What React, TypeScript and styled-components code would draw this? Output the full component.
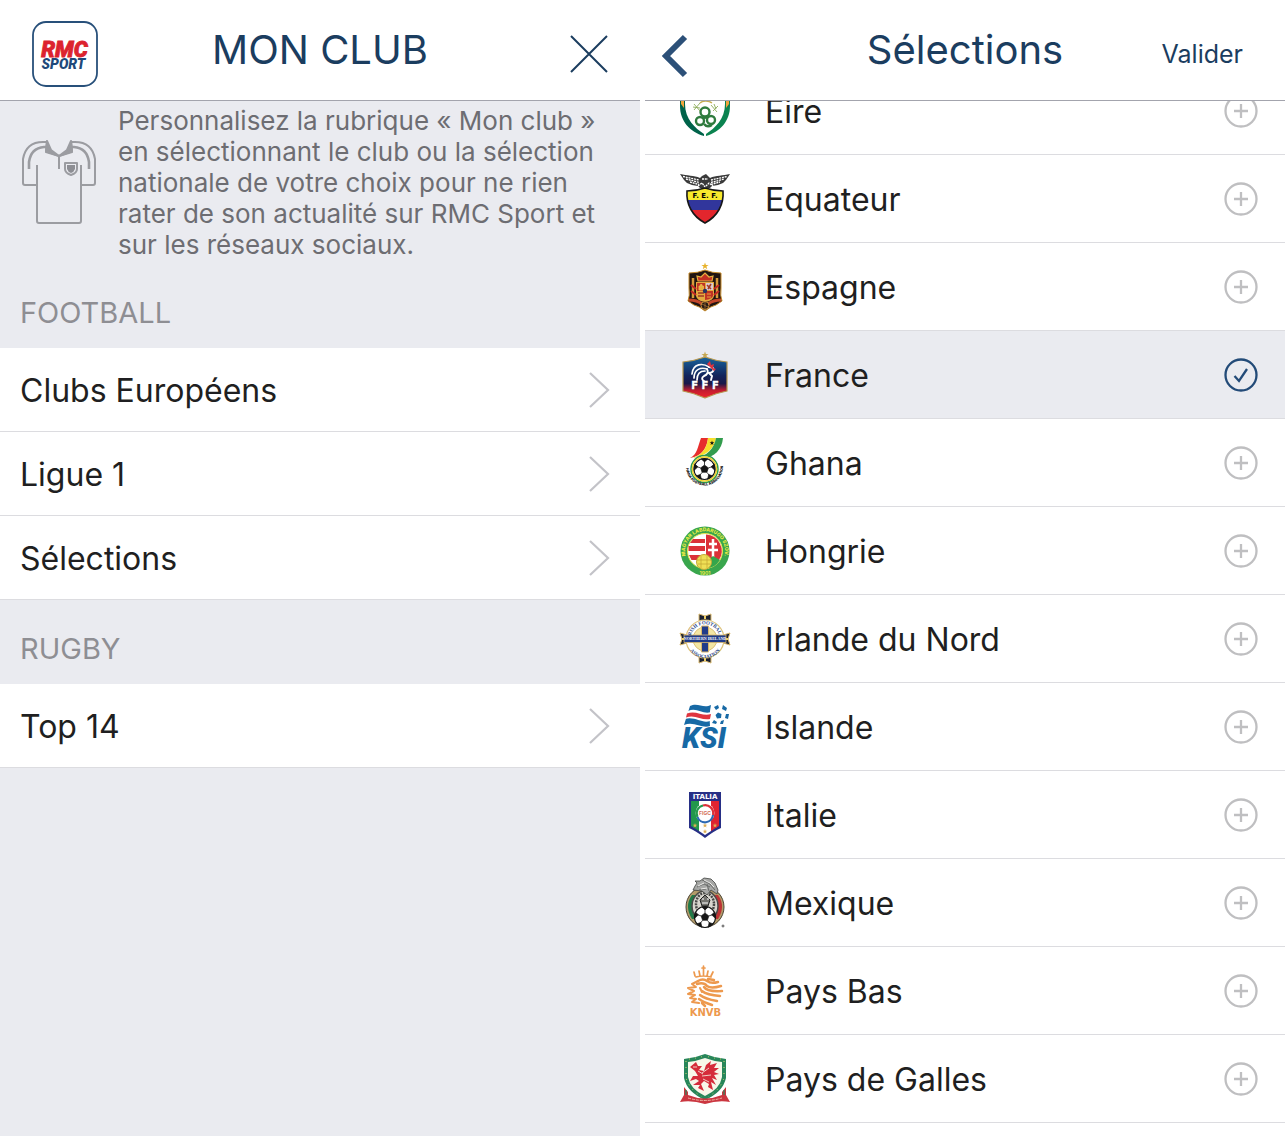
import React, { useState } from "react";
import styled, { createGlobalStyle } from "styled-components";

const navy = "#1b3d5f";
const paper = "#eaebf0";
const rule = "#dcdce0";

const GlobalStyle = createGlobalStyle`
  *, *::before, *::after { box-sizing: border-box; }
  body {
    margin: 0;
    background: #fff;
    color: #1f1f21;
    font-family: Inter, Roboto, "Liberation Sans", sans-serif;
  }
`;

const Screens = styled.main`
  display: grid;
  grid-template-columns: 1fr 1fr;
  gap: 5px;
  height: 100vh;
  overflow: hidden;
`;

const Screen = styled.section<{ $tone?: string }>`
  display: flex;
  flex-direction: column;
  min-width: 0;
  min-height: 0;
  background: ${(p) => p.$tone ?? "#fff"};
`;

const Header = styled.header`
  display: grid;
  grid-template-columns: 1fr auto 1fr;
  align-items: center;
  flex: none;
  height: 101px;
  padding-top: 8px;
  background: #fff;
  border-bottom: 1px solid #a3a4ad;
`;

const Title = styled.h1`
  margin: 0;
  padding-bottom: 8px;
  color: ${navy};
  font-size: 40px;
  font-weight: 400;
  line-height: 48px;
`;

const Logo = styled.a`
  display: block;
  justify-self: start;
  height: 66px;
  margin-left: 32px;
`;

const HeaderButton = styled.button<{ $side: "start" | "end"; $inset: number }>`
  display: flex;
  justify-self: ${(p) => p.$side};
  margin: 0 ${(p) => p.$inset}px;
  padding: 0;
  border: 0;
  background: none;
  color: ${navy};
  font: inherit;
  font-size: 25px;
  line-height: 32px;
  cursor: pointer;
`;

const Intro = styled.div`
  display: flex;
  align-items: center;
  gap: 22px;
  padding: 4px 36px 4px 22px;

  svg { flex: none; }
`;

const IntroText = styled.p`
  margin: 0;
  color: #6d6d72;
  font-size: 26px;
  line-height: 31px;
`;

const GroupTitle = styled.h2`
  display: flex;
  align-items: center;
  height: 84px;
  margin: 0;
  padding: 12px 20px 0;
  color: #8e8e93;
  font-size: 29px;
  font-weight: 400;
`;

const PlainList = styled.ul`
  margin: 0;
  padding: 0;
  list-style: none;
`;

const MenuLink = styled.a`
  display: flex;
  align-items: center;
  justify-content: space-between;
  height: 84px;
  padding: 0 30px 0 20px;
  border-bottom: 1px solid ${rule};
  background: #fff;
  color: inherit;
  font-size: 32px;
  text-decoration: none;
`;

const RowText = styled.span`
  flex: 1;
  padding-top: 2px;
`;

const Viewport = styled.div`
  flex: 1;
  min-height: 0;
  overflow: hidden;
`;

const ScrolledList = styled(PlainList)`
  margin-top: -34px;
`;

const TeamRow = styled.label<{ $selected: boolean }>`
  display: flex;
  align-items: center;
  gap: 35px;
  height: 88px;
  padding: 0 27px 0 35px;
  border-bottom: 1px solid ${rule};
  background: ${(p) => (p.$selected ? paper : "#fff")};
  font-size: 32px;
  cursor: pointer;
`;

const Tick = styled.span`
  display: grid;
  width: 34px;
  height: 34px;

  > * { grid-area: 1 / 1; }
`;

const TickInput = styled.input`
  width: 34px;
  height: 34px;
  margin: 0;
  border-radius: 50%;
  appearance: none;
  cursor: pointer;
`;

const TickMark = styled.svg`
  pointer-events: none;
`;

const CrestArt = styled.svg`
  flex: none;
  width: 50px;
  height: 50px;
  overflow: visible;
`;

const star = "M0-4 1-1.2 4-1.2 1.6.6 2.5 3.5 0 1.7-2.5 3.5-1.6.6-4-1.2-1-1.2Z";

const Ball = ({ x, y, r }: { x: number; y: number; r: number }) => (
  <g transform={`translate(${x} ${y}) scale(${r / 10})`}>
    <circle r="9.6" fill="#fff" stroke="#151515" strokeWidth="1" />
    <path d="M0-3.6 3.5-1 2.2 3-2.2 3-3.5-1ZM-3-9.2 3-9.2 0-6.4ZM8.8-4.6 9.6 1.4 6-2ZM7.4 6.2 2.8 9.3 3.8 5ZM-7.4 6.2-2.8 9.3-3.8 5ZM-8.8-4.6-9.6 1.4-6-2Z" fill="#151515" stroke="#151515" strokeWidth=".6" />
    <path d="M0-3.6V-7M3.5-1 6.7-2M2.2 3 4.2 5.7M-2.2 3-4.2 5.7M-3.5-1-6.7-2" fill="none" stroke="#151515" strokeWidth=".7" />
  </g>
);

const Eire = () => (
  <>
    <path d="M0 0H5V18C5 33 15 42 24 48V50C10 46 0 35 0 20Z" fill="#00634a" />
    <path d="M50 0H45V18C45 33 35 42 26 48V50C40 46 50 35 50 20Z" fill="#0b8350" />
    <path d="M1 6H4V22L1 18ZM46 6H49V18L46 22Z" fill="#f0a33c" />
    <g fill="none" stroke="#2f7b3e" strokeWidth="2.4">
      <circle cx="20" cy="35" r="4" />
      <circle cx="31" cy="34" r="4" />
      <circle cx="25" cy="26" r="4.5" />
      <path d="M22 31Q26 33 28 30M24 38Q27 42 32 39" />
    </g>
    <path d="M14 18 20 25M20 17 14 24M13 21 20 22M34 18 36 23M31 19 37 26M38 20 33 25" stroke="#8cab5a" strokeWidth=".9" />
    <path d="M20 17C23 14 29 15 32 17" fill="none" stroke="#c7ad52" strokeWidth="1.4" />
  </>
);

const ecuadorShield = "M7 17Q16 17 25 14 34 17 43 17C44 30 38 42 25 49 12 42 6 30 7 17Z";

const Equateur = () => (
  <>
    <path d="M0 0C7 2 14 1 20 4L22 2 26 0 29 3 30 4C36 1 43 2 50 0L46 6 43 9 38 11 32 12 30 14H20L18 12 12 11 7 9 4 6Z" fill="#3a3a3a" />
    <path d="M3 2.5 19 6M6 5 19 8.5M10 8 19 10.5M31 6 47 2.5M31 8.5 44 5M31 10.5 40 8M22 5H28M18 12 22 9 25 13 29 9 33 12" fill="none" stroke="#fff" strokeWidth="1.3" strokeDasharray="2 .8" />
    <clipPath id="ecuador-shield"><path d={ecuadorShield} /></clipPath>
    <g clipPath="url(#ecuador-shield)">
      <path d="M0 12H50V26H0Z" fill="#f8ea2d" />
      <path d="M0 26H50V36H0Z" fill="#31369c" />
      <path d="M0 36H50V50H0Z" fill="#e3262d" />
    </g>
    <path d={ecuadorShield} fill="none" stroke="#171717" strokeWidth="1.6" />
    <text x="25" y="24" textAnchor="middle" fontSize="7" fontWeight="700" fontFamily="DejaVu Sans, sans-serif">F. E. F.</text>
  </>
);

const Espagne = () => (
  <>
    <path d={star} transform="translate(25 4) scale(.9)" fill="#e8b32c" />
    <path d="M9 11Q18 11 25 8 32 11 41 11V26Q40 34 42 39L36 43Q31 44 25 49 19 44 14 43L8 39Q10 34 9 26Z" fill="#211511" stroke="#c58a2a" strokeWidth="1" />
    <path d="M16 20H34V34Q33 39 25 40 17 39 16 34Z" fill="#e3a93f" />
    <path d="M17 21H25V29H17ZM25 29H33V34Q32 37 25 38Z" fill="#c03424" />
    <path d="M26 21H33V28H26Z" fill="#dccbd2" />
    <path d="M18 31H24M18 34H24M27 23 31 27M28 27 31 22" stroke="#a13a26" strokeWidth="1.6" />
    <path d="M19 24H20.5V22.5H22V24H23.5V28H19ZM27 32H31M27 35H31" stroke="#efbd4b" strokeWidth=".8" fill="#e5b040" />
    <circle cx="25" cy="29" r="2.2" fill="#29345f" />
    <path d="M18 19 17 14 21 15 25 11 29 15 33 14 32 19Z" fill="#c13123" stroke="#e4ae40" strokeWidth="1.2" />
    <path d="M13 16V36M37 16V36" stroke="#d69b3b" strokeWidth="2.5" />
    <path d="M11 23 16 27M11 29 16 33M39 23 34 27M39 29 34 33" stroke="#c42824" strokeWidth="2" />
    <path d="M9 38Q17 38 22 42M41 38Q33 38 28 42" stroke="#c4472a" strokeWidth="3" fill="none" />
    <circle cx="25" cy="43.5" r="4" fill="#261a15" stroke="#cf923d" />
    <path d="M22 42 28 45M25 40V47" stroke="#b27933" strokeWidth=".7" />
  </>
);

const France = () => (
  <>
    <defs>
      <linearGradient id="france-field" x1="0" y1="0" x2="0" y2="1">
        <stop offset="0" stopColor="#18649c" />
        <stop offset=".45" stopColor="#13255c" />
        <stop offset=".65" stopColor="#1a1748" />
        <stop offset=".82" stopColor="#c51c2f" />
        <stop offset="1" stopColor="#ee252b" />
      </linearGradient>
    </defs>
    <path d="M25 7Q36 11 47 12V41Q36 43 25 48 14 43 3 41V12Q14 11 25 7Z" fill="url(#france-field)" stroke="#b6974f" strokeWidth="1.2" />
    <path d={star} transform="translate(25 5) scale(.9)" fill="#c5a752" />
    <g fill="none" stroke="#fff" strokeLinecap="round">
      <path d="M12 24C13 13 23 13 29 17M14 28C14 19 21 17 27 19M17 30C17 23 20 21 25 21" strokeWidth="1.7" />
      <path d="M29 17C35 17 35 22 29 23M27 19C29 22 27 25 24 26 21 28 22 30 24 31M29 23 32 26 31 30" strokeWidth="1.9" />
    </g>
    <path d="M27 14 30 11 31 15 34 14 33 18 36 19 34 21Z" fill="#dd3340" />
    <text x="25" y="39" textAnchor="middle" fontSize="10" fontWeight="700" fontFamily="DejaVu Sans, sans-serif" fill="#fff" stroke="#fff" strokeWidth=".3">F F F</text>
  </>
);

const Ghana = () => (
  <>
    <path d="M10 20C17 17 18 8 21 0H28C27 10 22 18 10 20Z" fill="#e72e2d" />
    <path d="M12 20C23 17 27 9 28 0H36C34 11 26 18 12 20Z" fill="#f6df2d" />
    <path d="M14 21C27 18 34 11 36 0H43C42 12 34 19 24 20Z" fill="#329c4d" />
    <path d={star} transform="translate(32 5) scale(.6)" fill="#111" />
    <circle cx="24.5" cy="31" r="13.5" fill="#fff" stroke="#2f9b4d" strokeWidth="1.5" />
    <circle cx="24.5" cy="31" r="12" fill="none" stroke="#efd32d" strokeWidth="1.5" />
    <Ball x={24.5} y={31} r={11} />
    <path id="ghana-ring" d="M6 29A18.5 18.5 0 0 0 43 29" fill="none" />
    <text fontSize="3.6" fontWeight="900" fill="#222"><textPath href="#ghana-ring" startOffset="50%" textAnchor="middle">GHANA FOOTBALL ASSOCIATION</textPath></text>
  </>
);

const Hongrie = () => (
  <>
    <circle cx="25" cy="25" r="24.5" fill="#39a64d" />
    <circle cx="25" cy="25" r="17.5" fill="#fff" stroke="#e4e54c" strokeWidth="1" />
    <path d="M13 13H25V17H10ZM8.500 20H25V25H8.500ZM9 29H25V34H11.500Z" fill="#db3138" />
    <path d="M26 8.500A16.500 16.500 0 0 1 39 34H26Z" fill="#db3138" />
    <path d="M33 13V31M29 18H37M28 24H38" stroke="#fff" strokeWidth="2.5" />
    <path d="M26 36 33 30 40 34Q34 43 26 42Z" fill="#34a54b" />
    <circle cx="24" cy="36" r="7.5" fill="#eedf55" stroke="#c2a938" />
    <path d="M17 34H31M18 38H30M21 30V42M27 30V42" stroke="#c5aa36" strokeWidth=".8" />
    <path id="hungary-ring" d="M7 34A20 20 0 1 1 43 34" fill="none" />
    <text fontSize="5" fontWeight="800" fill="#e8e945"><textPath href="#hungary-ring" startOffset="50%" textAnchor="middle">MAGYAR LABDARUGO SZOV.</textPath></text>
    <text x="25" y="48.5" textAnchor="middle" fontSize="5" fontWeight="700" fill="#e8e945">1901</text>
  </>
);

const IrlandeDuNord = () => (
  <>
    <path d="M19 0 25 2 31 0V7H28V43H31V49L25 47 19 49V43H22V7H19Z" fill="#1b2131" stroke="#d8b86e" strokeWidth="1" />
    <path d="M0 19 7 21H43L50 19 48 25 50 31 43 29H7L0 31 2 25Z" fill="#1b2131" stroke="#d8b86e" strokeWidth="1" />
    <circle cx="25" cy="25" r="19" fill="#fff" stroke="#ddc178" strokeWidth="1.2" />
    <circle cx="25" cy="25" r="12" fill="#f3e6a4" stroke="#ddc178" strokeWidth="1" />
    <path d="M21.500 12H28.500V38H21.500Z" fill="#203c89" stroke="#d8b86e" />
    <path d="M4 21H46V28.500H4Z" fill="#203c89" stroke="#d8b86e" strokeWidth=".8" />
    <text x="25" y="26.2" textAnchor="middle" fontSize="4" fontWeight="700" fill="#fff" fontFamily="Liberation Serif, serif">NORTHERN IRELAND</text>
    <path id="ifa-top" d="M11 21A14.5 14.5 0 0 1 39 21" fill="none" />
    <path id="ifa-bottom" d="M7 30A18.5 18.5 0 0 0 43 30" fill="none" />
    <g fontFamily="Liberation Serif, serif" fontSize="5" fontWeight="700" fill="#28478d">
      <text><textPath href="#ifa-top" startOffset="50%" textAnchor="middle">IRISH FOOTBALL</textPath></text>
      <text><textPath href="#ifa-bottom" startOffset="50%" textAnchor="middle">ASSOCIATION</textPath></text>
    </g>
    <path d="M25 2V5M25 44V47M2 25H4M46 25H48" stroke="#efcf66" strokeWidth="2" />
  </>
);

const Islande = () => (
  <>
    <path d="M10 4C18 0 23 7 31 3Q29 12 30 24C22 27 14 19 4 23Z" fill="#1769a5" />
    <path d="M8 9C17 5 23 13 31 10L30 19C22 22 15 14 5 17Z" fill="#fff" />
    <path d="M7 11.5C16 8 23 15 31 12L30 17C22 19 15 12 6 15.5Z" fill="#df353f" />
    <g fill="#1769a5">
      <path d="M34 5 38 3 39 6 36 8ZM43 3 47 6 46 9 42 7Z" />
      <path d="M38 10.5 41.5 12 41 16 37 16.5 35.5 13ZM46 12 49 12 48 17 45 16Z" />
      <path d="M34 18 37 20 36 22 32 21ZM41 19 44 18 43 22 40 22Z" />
    </g>
    <text x="24" y="46" textAnchor="middle" fontFamily="Roboto, sans-serif" fontStyle="italic" fontSize="29" fontWeight="900" fill="#1769a5">KSI</text>
  </>
);

const Italie = () => (
  <>
    <path d="M9 2H41V38Q34 41 25 48 16 41 9 38Z" fill="#272f86" />
    <path d="M11 11H19V41L11 36Z" fill="#23974b" />
    <path d="M19 11H31V41L25 45 19 41Z" fill="#fff" />
    <path d="M31 11H39V36L31 41Z" fill="#df2431" />
    <text x="25" y="9" textAnchor="middle" fontSize="7" fontWeight="700" fontFamily="DejaVu Sans, sans-serif" fill="#fff">ITALIA</text>
    <circle cx="25" cy="23" r="9.5" fill="#fff" />
    <path d="M17.5 27A8 8 0 0 1 23 15.5" fill="none" stroke="#27994c" strokeWidth="2.2" />
    <path d="M23 15.5A8 8 0 0 1 33 25" fill="none" stroke="#dc3038" strokeWidth="2.2" />
    <path d="M33 25A8 8 0 0 1 17.5 27" fill="none" stroke="#2c69b4" strokeWidth="2.2" />
    <text x="25" y="25" textAnchor="middle" fontSize="5" fontWeight="700" fill="#d2705a">FIGC</text>
    <g fill="#ddaf55">
      <path d={star} transform="translate(15 35.5) scale(.6)" />
      <path d={star} transform="translate(35 35.5) scale(.6)" />
      <path d={star} transform="translate(25 35.5) scale(.6)" />
      <path d={star} transform="translate(25 41.5) scale(.6)" />
    </g>
  </>
);

const Mexique = () => (
  <>
    <ellipse cx="25" cy="29" rx="19" ry="20" fill="#b39b69" stroke="#4d4638" />
    <path d="M12 17Q4 28 12 41L19 41V17Z" fill="#227a48" />
    <path d="M38 17Q46 28 38 41L31 41V17Z" fill="#bd3435" />
    <ellipse cx="25" cy="28" rx="13" ry="15" fill="#d9d7cf" stroke="#4a4a48" strokeWidth="1.5" />
    <ellipse cx="25" cy="26" rx="9" ry="11" fill="none" stroke="#484846" strokeWidth="2.5" strokeDasharray="2 1" />
    <path d="M15 8 17 5 15 3 20 3 24 0 31 1 35 5 38 12 37 16 31 12 27 17 22 13 13 12Z" fill="#a7a8a6" stroke="#414441" strokeWidth=".8" />
    <path d="M17 9 24 6 30 9M22 2 28 4 35 12M19 12 26 11M27 6 29 13M24 3 32 7" fill="none" stroke="#6a6c6a" strokeWidth="1" />
    <path d="M18 8 24 5M24 2 30 5 34 9M21 11 27 10" fill="none" stroke="#ededeb" strokeWidth="1" />
    <path d="M20 22 25 17 30 22 28 28H22Z" fill="#757570" stroke="#222" />
    <path d="M22 21H24M27 21H29M22 25H28" stroke="#fff" strokeWidth="1.2" />
    <Ball x={25} y={39} r={11} />
    <circle cx="43" cy="48" r="1" fill="none" stroke="#333" strokeWidth=".8" />
  </>
);

const PaysBas = () => (
  <>
    <g fill="none" stroke="#ed994e" strokeLinecap="round" strokeLinejoin="round">
      <path d="M15 10 14 6M31 10 33 6M20 10 19 5M27 10 28 5M23.500 10V3M16 11Q23 9 31 11M22 2H25M23.500 0V3" strokeWidth="1.7" />
      <path d="M18 15Q23 12 27 15 31 18 38 16M17 18Q24 16 27 20 31 23 41 20M24 21Q27 26 42 25M22 25Q27 29 40 30M20 29Q25 33 37 35M19 33Q23 36 32 39M22 37 25 40M28 13 34 14" strokeWidth="2.5" />
      <path d="M18 15 12 18 16 21 8 22 14 25 8 28 15 29 10 32 16 33 12 36 19 37M20 22 22 26" strokeWidth="2" />
    </g>
    <text x="25.500" y="50" textAnchor="middle" fontFamily="DejaVu Sans, sans-serif" fontSize="10" fontWeight="700" fill="#ed994e">KNVB</text>
  </>
);

const PaysDeGalles = () => (
  <>
    <path d="M4 5Q15 4 25 0 35 4 46 5V24Q43 38 25 46 7 38 4 24Z" fill="#28865a" />
    <path d="M8 8Q17 7 25 4 33 7 42 8V23Q40 35 25 42 10 35 8 23Z" fill="#f8f7e9" />
    <path d="M6 7V24Q10 36 22 43M44 7V24Q40 36 28 43M9 5Q18 4 24 2M41 5Q32 4 26 2" fill="none" stroke="#d8d66f" strokeWidth="1" strokeDasharray="1 5" />
    <path d="M10 13 16 8 18 12 22 12 19 16 24 17 26 11 31 7 30 11 37 9 34 14 39 14 34 18 39 20 34 21 37 26 32 24 36 31 31 28 33 36 28 33 29 30 24 27 21 30 24 37 18 34 20 31 13 31 19 27 16 25 10 27 13 22 18 22 15 17Z" fill="#d52c3a" />
    <path d="M22 19 29 14M22 22 31 21M18 17 23 20M23 25 29 28M13 13H17" stroke="#f8f7e9" strokeWidth=".8" />
    <path d="M4 33 8 38 8 41Q25 48 42 41L42 38 46 33 46 41 50 48Q38 46 25 50 12 46 0 48L4 41Z" fill="#cb3640" />
    <path d="M8 44Q25 49 42 44" fill="none" stroke="#efb5a5" strokeWidth="1" strokeDasharray="3 1" />
    <path d="M6 36V41M44 36V41" stroke="#28865a" strokeWidth="1.2" />
  </>
);

const teams = [
  { name: "Eire", Crest: Eire },
  { name: "Equateur", Crest: Equateur },
  { name: "Espagne", Crest: Espagne },
  { name: "France", Crest: France },
  { name: "Ghana", Crest: Ghana },
  { name: "Hongrie", Crest: Hongrie },
  { name: "Irlande du Nord", Crest: IrlandeDuNord },
  { name: "Islande", Crest: Islande },
  { name: "Italie", Crest: Italie },
  { name: "Mexique", Crest: Mexique },
  { name: "Pays Bas", Crest: PaysBas },
  { name: "Pays de Galles", Crest: PaysDeGalles },
];

const groups = [
  { title: "FOOTBALL", items: ["Clubs Européens", "Ligue 1", "Sélections"] },
  { title: "RUGBY", items: ["Top 14"] },
];

const RmcLogo = () => (
  <svg width="66" height="66" viewBox="0 0 66 66" role="img" aria-label="RMC Sport">
    <rect x="1" y="1" width="64" height="64" rx="13" fill="#fff" stroke="#28507a" strokeWidth="1.8" />
    <text x="32.5" y="36" textAnchor="middle" fontFamily="Roboto, sans-serif" fontSize="22" fontStyle="italic" fontWeight="900" fill="#dc232e" stroke="#dc232e" strokeWidth=".8">RMC</text>
    <text x="31.5" y="48" textAnchor="middle" fontFamily="Roboto, sans-serif" fontSize="14" fontStyle="italic" fontWeight="900" fill="#20497a">SPORT</text>
  </svg>
);

const Jersey = () => (
  <svg width="74" height="86" viewBox="0 0 74 86" fill="none" stroke="#9b9ca1" strokeWidth="2" strokeLinejoin="round" aria-hidden="true">
    <path d="M15 25V81Q15 83 17 83H57Q59 83 59 81V25" />
    <path d="M15 45H3Q1 45 1 43V19Q4 2 21 2H24M59 45H71Q73 45 73 43V19Q70 2 53 2H50" />
    <path d="M7 29V22Q9 8 22 7H24M67 29V22Q65 8 52 7H50" strokeWidth="2.6" />
    <path d="M25 1 24 12 37 16 50 12 49 1M37 16V29" />
    <path d="M25 1 24 11 37 16 29 10ZM49 1 50 11 37 16 45 10Z" fill="#9b9ca1" />
    <path d="M43 23H55V29Q55 33 49 35 43 33 43 29Z" />
    <path d="M45 25H53V29Q52 32 49 33 46 32 45 29Z" fill="#8d8e94" stroke="none" />
  </svg>
);

const Chevron = () => (
  <svg width="22" height="38" viewBox="0 0 22 38" fill="none" stroke="#c3c3c8" strokeWidth="2.2" aria-hidden="true">
    <path d="M2 2 20 19 2 36" />
  </svg>
);

export default function App() {
  const [selected, setSelected] = useState("France");

  return (
    <>
      <GlobalStyle />
      <Screens>
        <Screen $tone={paper}>
          <Header>
            <Logo href="#accueil"><RmcLogo /></Logo>
            <Title>MON CLUB</Title>
            <HeaderButton $side="end" $inset={32} type="button" aria-label="Fermer">
              <svg width="38" height="38" viewBox="0 0 38 38" stroke={navy} strokeWidth="2">
                <path d="M1 1 37 37M37 1 1 37" />
              </svg>
            </HeaderButton>
          </Header>
          <Intro>
            <Jersey />
            <IntroText>
              Personnalisez la rubrique «&nbsp;Mon club&nbsp;» en sélectionnant le club ou la sélection
              nationale de votre choix pour ne rien rater de son actualité sur RMC Sport et sur les
              réseaux sociaux.
            </IntroText>
          </Intro>
          {groups.map((group) => (
            <nav key={group.title} aria-label={group.title}>
              <GroupTitle>{group.title}</GroupTitle>
              <PlainList>
                {group.items.map((item) => (
                  <li key={item}>
                    <MenuLink href="#selections">
                      <RowText>{item}</RowText>
                      <Chevron />
                    </MenuLink>
                  </li>
                ))}
              </PlainList>
            </nav>
          ))}
        </Screen>
        <Screen>
          <Header>
            <HeaderButton $side="start" $inset={16} type="button" aria-label="Retour">
              <svg width="27" height="48" viewBox="0 -4 27 48" fill="none" stroke="#2c5078" strokeWidth="6">
                <path d="M24 3 5 22 24 41" />
              </svg>
            </HeaderButton>
            <Title>Sélections</Title>
            <HeaderButton $side="end" $inset={42} type="button">Valider</HeaderButton>
          </Header>
          <Viewport>
            <ScrolledList>
              {teams.map(({ name, Crest }) => {
                const active = name === selected;
                return (
                  <li key={name}>
                    <TeamRow $selected={active}>
                      <CrestArt viewBox="0 0 50 50" aria-hidden="true"><Crest /></CrestArt>
                      <RowText>{name}</RowText>
                      <Tick>
                        <TickInput type="radio" name="team" checked={active} onChange={() => setSelected(name)} />
                        <TickMark width="34" height="34" viewBox="0 0 34 34" fill="none" stroke={active ? "#234b78" : "#bfbfc1"} strokeWidth="2.3">
                          <circle cx="17" cy="17" r="15.5" />
                          <path d={active ? "M10.500 18 15 23 23 11" : "M17 10V24M10 17H24"} />
                        </TickMark>
                      </Tick>
                    </TeamRow>
                  </li>
                );
              })}
            </ScrolledList>
          </Viewport>
        </Screen>
      </Screens>
    </>
  );
}
